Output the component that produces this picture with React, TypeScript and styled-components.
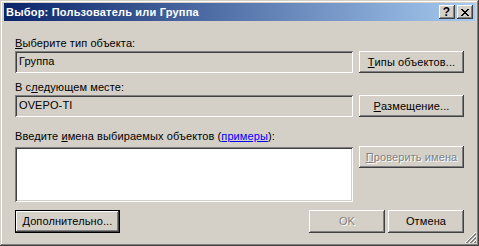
import React from 'react'
import styled, { createGlobalStyle } from 'styled-components'

const GlobalStyle = createGlobalStyle`
    html, body {
        margin: 0;
        padding: 0;
        background: #d4d0c8;
    }
    * {
        box-sizing: border-box;
    }
`

const FACE = '#d4d0c8'
const SHADOW = '#808080'
const DARK = '#404040'

const Window = styled.div`
    position: relative;
    width: 479px;
    height: 246px;
    padding: 3px 4px 4px 4px;
    background: ${FACE};
    box-shadow: inset -1px -1px ${DARK}, inset 1px 1px ${FACE},
        inset -2px -2px ${SHADOW}, inset 2px 2px #fff;
    font-family: 'Liberation Sans', Arial, sans-serif;
    font-size: 11px;
    color: #000;
    display: flex;
    flex-direction: column;
`

const TitleBar = styled.div`
    height: 18px;
    display: flex;
    align-items: center;
    justify-content: space-between;
    padding: 0 2px;
    background: linear-gradient(to right, #0a246a, #a6caf0);
`

const Title = styled.span`
    color: #fff;
    font-weight: bold;
    font-size: 11px;
    letter-spacing: 0.2px;
    white-space: nowrap;
`

const TitleButtons = styled.div`
    display: flex;
    gap: 2px;
`

const TitleButton = styled.div`
    width: 16px;
    height: 14px;
    display: flex;
    align-items: center;
    justify-content: center;
    background: ${FACE};
    box-shadow: inset -1px -1px ${DARK}, inset 1px 1px #fff,
        inset -2px -2px ${SHADOW}, inset 2px 2px ${FACE};
    font-weight: bold;
    font-size: 12px;
    line-height: 14px;
    padding-right: 1px;
`

const Body = styled.div`
    flex: 1;
    display: flex;
    flex-direction: column;
    padding: 16px 11px 0 11px;
    letter-spacing: 0.1px;
`

const Label = styled.div<{ $top?: number }>`
    height: 13px;
    line-height: 13px;
    margin-top: ${(p) => p.$top ?? 0}px;
    margin-bottom: 1px;
    white-space: nowrap;
`

const Mn = styled.span`
    text-decoration: underline;
`

const Link = styled.span`
    color: #0000ff;
    text-decoration: underline;
`

const Row = styled.div<{ $gap?: number }>`
    display: grid;
    grid-template-columns: 1fr 105px;
    column-gap: 6px;
    align-items: start;
    margin-top: ${(p) => p.$gap ?? 0}px;
`

const TextField = styled.div<{ $readOnly?: boolean; $height?: number }>`
    height: ${(p) => p.$height ?? 22}px;
    margin-top: ${(p) => (p.$height ? 1 : 0)}px;
    padding: 4px 4px;
    line-height: 13px;
    background: ${(p) => (p.$readOnly ? FACE : '#fff')};
    box-shadow: inset 1px 1px ${SHADOW}, inset -1px -1px #fff,
        inset 2px 2px ${DARK}, inset -2px -2px ${FACE};
`

const Button = styled.div<{ $disabled?: boolean; $default?: boolean; $w?: number; $h?: number }>`
    width: ${(p) => p.$w ?? 105}px;
    height: ${(p) => p.$h ?? 22}px;
    display: flex;
    align-items: center;
    justify-content: center;
    white-space: nowrap;
    background: ${FACE};
    border: ${(p) => (p.$default ? '1px solid #000' : 'none')};
    box-shadow: inset -1px -1px ${DARK}, inset 1px 1px #fff,
        inset -2px -2px ${SHADOW}, inset 2px 2px ${FACE};
    color: ${(p) => (p.$disabled ? SHADOW : '#000')};
    text-shadow: ${(p) => (p.$disabled ? '1px 1px 0 #fff' : 'none')};
    padding-bottom: 1px;
`

const Footer = styled.div`
    display: flex;
    justify-content: space-between;
    margin-top: 8px;
`

const FooterRight = styled.div`
    display: flex;
    gap: 3px;
`

const Grip = styled.svg`
    position: absolute;
    right: 3px;
    bottom: 3px;
`

const CloseGlyph = () => {
    const rows = ['11000011', '01100110', '00111100', '00011000', '00111100', '01100110', '11000011']
    return (
        <svg width="8" height="7" viewBox="0 0 8 7" shapeRendering="crispEdges">
            {rows.flatMap((r, y) =>
                r.split('').map((c, x) => (c === '1' ? <rect key={`${x}-${y}`} x={x} y={y} width="1" height="1" fill="#000" /> : null))
            )}
        </svg>
    )
}

const SizeGrip = () => (
    <Grip width="12" height="12" viewBox="0 0 12 12" shapeRendering="crispEdges">
        {[0, 4, 8].map((o) => (
            <g key={o}>
                <line x1={o + 1} y1="12" x2="12" y2={o + 1} stroke="#fff" />
                <line x1={o + 2} y1="12" x2="12" y2={o + 2} stroke={SHADOW} />
                <line x1={o + 3} y1="12" x2="12" y2={o + 3} stroke={SHADOW} />
            </g>
        ))}
    </Grip>
)

export default function App() {
    return (
        <>
            <GlobalStyle />
            <Window>
                <TitleBar>
                    <Title>Выбор: Пользователь или Группа</Title>
                    <TitleButtons>
                        <TitleButton>?</TitleButton>
                        <TitleButton>
                            <CloseGlyph />
                        </TitleButton>
                    </TitleButtons>
                </TitleBar>
                <Body>
                    <Label>
                        <Mn>В</Mn>ыберите тип объекта:
                    </Label>
                    <Row>
                        <TextField $readOnly>Группа</TextField>
                        <Button>
                            <Mn>Т</Mn>ипы объектов...
                        </Button>
                    </Row>

                    <Label $top={8}>
                        В с<Mn>л</Mn>едующем месте:
                    </Label>
                    <Row>
                        <TextField $readOnly>OVEPO-TI</TextField>
                        <Button>
                            <Mn>Р</Mn>азмещение...
                        </Button>
                    </Row>

                    <Label $top={13}>
                        Введите <Mn>и</Mn>мена выбираемых объектов (<Link>примеры</Link>):
                    </Label>
                    <Row $gap={2}>
                        <TextField $height={55} />
                        <Button $disabled>
                            <Mn>П</Mn>роверить имена
                        </Button>
                    </Row>

                    <Footer>
                        <Button $default $h={23}>
                            <Mn>Д</Mn>ополнительно...
                        </Button>
                        <FooterRight>
                            <Button $disabled $w={76} $h={23}>
                                OK
                            </Button>
                            <Button $w={76} $h={23}>
                                Отмена
                            </Button>
                        </FooterRight>
                    </Footer>
                </Body>
                <SizeGrip />
            </Window>
        </>
    )
}
